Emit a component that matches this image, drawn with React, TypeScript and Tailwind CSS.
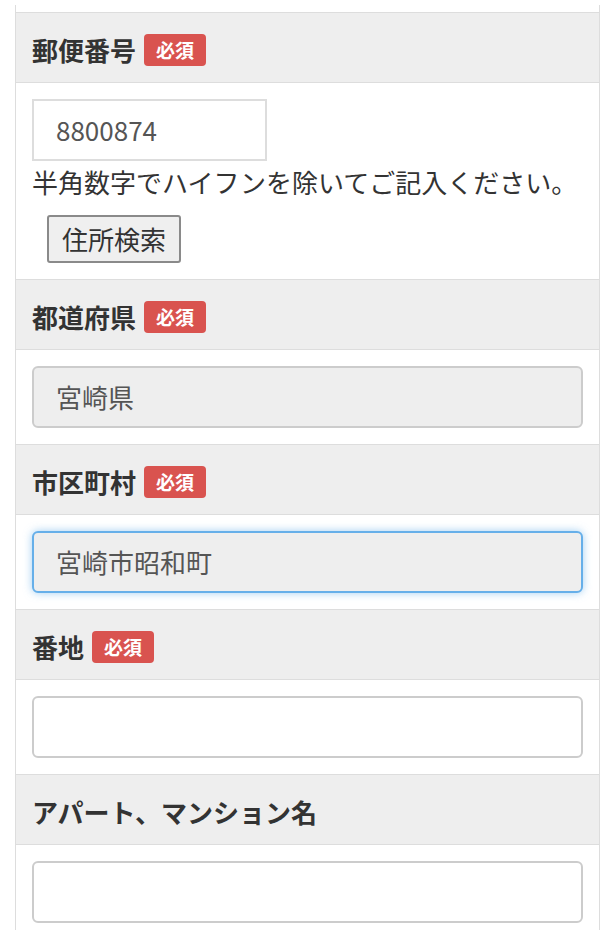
import React from "react";

const font = { fontFamily: '"Noto Sans CJK JP", "Noto Sans", sans-serif' };

function Badge() {
  return (
    <span className="ml-[8px] inline-flex h-[32px] w-[62px] items-center justify-center rounded-[4px] bg-[#d9534f] text-[19px] font-bold leading-none text-white">
      必須
    </span>
  );
}

function Header({ label, required }: { label: string; required?: boolean }) {
  return (
    <div className="flex h-[70px] items-center border-t border-[#dddddd] bg-[#eeeeee] px-[16px] pt-[4px]">
      <span className="text-[26px] font-bold leading-none text-[#333333]">{label}</span>
      {required && <Badge />}
    </div>
  );
}

function Body({ children }: { children: React.ReactNode }) {
  return <div className="border-t border-[#dddddd] bg-white px-[16px] py-[16px]">{children}</div>;
}

function TextBox({ value, variant }: { value?: string; variant: "plain" | "readonly" | "focus" }) {
  const cls =
    variant === "readonly"
      ? "border-[#cccccc] bg-[#eeeeee]"
      : variant === "focus"
      ? "border-[#66afe9] bg-[#eeeeee] shadow-[0_0_8px_rgba(102,175,233,0.6)]"
      : "border-[#cccccc] bg-white";
  return (
    <div
      className={`flex h-[62px] w-full items-center rounded-[6px] border-2 px-[22px] text-[26px] leading-none text-[#555555] ${cls}`}
    >
      {value}
    </div>
  );
}

export default function App() {
  return (
    <div className="min-h-[930px] w-[615px] bg-white" style={font}>
      <div className="h-[5px]" />
      <div className="mx-[15px] border-x border-[#dddddd]">
        <div className="h-[7px]" />
        <Header label="郵便番号" required />
        <Body>
          <div className="flex h-[62px] w-[235px] items-center border-2 border-[#dddddd] bg-white px-[22px] text-[26px] leading-none text-[#555555]">
            8800874
          </div>
          <div className="mt-[2px] whitespace-nowrap text-[26px] leading-[37px] text-[#333333]">
            半角数字でハイフンを除いてご記入ください。
          </div>
          <div className="mt-[15px] pl-[15px]">
            <button className="flex h-[48px] w-[134px] items-center justify-center rounded-[3px] border-2 border-[#8a8a8a] bg-[#efefef] text-[26px] leading-none text-[#333333]">
              住所検索
            </button>
          </div>
        </Body>
        <Header label="都道府県" required />
        <Body>
          <TextBox value="宮崎県" variant="readonly" />
        </Body>
        <Header label="市区町村" required />
        <Body>
          <TextBox value="宮崎市昭和町" variant="focus" />
        </Body>
        <Header label="番地" required />
        <Body>
          <TextBox variant="plain" />
        </Body>
        <Header label="アパート、マンション名" />
        <Body>
          <TextBox variant="plain" />
        </Body>
      </div>
    </div>
  );
}
